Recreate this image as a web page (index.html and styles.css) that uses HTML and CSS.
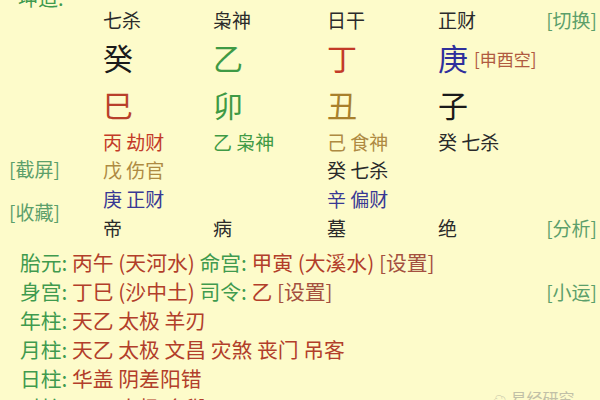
FILE: index.html
```html
<!DOCTYPE html>
<html lang="zh">
<head>
<meta charset="utf-8">
<link rel="stylesheet" href="styles.css">
</head>
<body>
<div class="page">
  <div class="topline"><span class="lbl">坤造:</span></div>
  <div class="pillars">
    <div class="c c1 r1 head">七杀</div>
    <div class="c c2 r1 head">枭神</div>
    <div class="c c3 r1 head">日干</div>
    <div class="c c4 r1 head">正财</div>
    <div class="c c5 r1 right"><span class="btn">[切换]</span></div>

    <div class="c c1 r2 big black">癸</div>
    <div class="c c2 r2 big green">乙</div>
    <div class="c c3 r2 big red">丁</div>
    <div class="c c4 r2 big blue">庚</div>
    <div class="c c5 r2"><span class="kong">[申酉空]</span></div>

    <div class="c c1 r3 big red2">巳</div>
    <div class="c c2 r3 big green">卯</div>
    <div class="c c3 r3 big gold">丑</div>
    <div class="c c4 r3 big black">子</div>

    <div class="side"><span class="btn">[截屏]</span><span class="btn">[收藏]</span></div>

    <div class="c c1 r4 red">丙 劫财</div>
    <div class="c c2 r4 green">乙 枭神</div>
    <div class="c c3 r4 gold2">己 食神</div>
    <div class="c c4 r4 dark">癸 七杀</div>

    <div class="c c1 r5 gold2">戊 伤官</div>
    <div class="c c3 r5 dark">癸 七杀</div>

    <div class="c c1 r6 blue2">庚 正财</div>
    <div class="c c3 r6 blue2">辛 偏财</div>

    <div class="c c1 r7 dark">帝</div>
    <div class="c c2 r7 dark">病</div>
    <div class="c c3 r7 dark">墓</div>
    <div class="c c4 r7 dark">绝</div>
    <div class="c c5 r7 right"><span class="btn">[分析]</span></div>
  </div>

  <div class="info">
    <div class="line"><span><span class="lbl">胎元:</span> <span class="val">丙午 (天河水)</span> <span class="lbl">命宫:</span> <span class="val">甲寅 (大溪水)</span> <span class="set">[设置]</span></span></div>
    <div class="line"><span><span class="lbl">身宫:</span> <span class="val">丁巳 (沙中土)</span> <span class="lbl">司令:</span> <span class="val">乙</span> <span class="set">[设置]</span></span><span class="btn">[小运]</span></div>
    <div class="line"><span><span class="lbl">年柱:</span> <span class="val">天乙 太极 羊刃</span></span></div>
    <div class="line"><span><span class="lbl">月柱:</span> <span class="val">天乙 太极 文昌 灾煞 丧门 吊客</span></span></div>
    <div class="line"><span><span class="lbl">日柱:</span> <span class="val">华盖 阴差阳错</span></span></div>
    <div class="line"><span><span class="lbl">时柱:</span> <span class="val">天乙 太极 金舆</span></span></div>
  </div>
</div>
<div class="watermark"><span class="wm-icon">☁</span> 易经研究</div>
</body>
</html>
```
FILE: styles.css
```css
html, body {
  margin: 0;
  padding: 0;
  background: #fdfbca;
  overflow: hidden;
  width: 600px;
  height: 400px;
}
body {
  font-family: "Noto Sans CJK SC", "Noto Sans", sans-serif;
  font-size: 19px;
  color: #222;
  position: relative;
}
.page {
  width: 600px;
}
.topline {
  height: 24px;
  margin-top: -14px;
  padding-left: 18px;
  font-size: 20px;
  line-height: 24px;
}
.pillars {
  display: grid;
  grid-template-columns: 103px 110px 114px 111px 1fr;
  grid-template-rows: 30px 46px 48px 26px 30px 28px 30px;
  margin-top: -6px;
}
.c {
  display: flex;
  align-items: center;
  white-space: nowrap;
  line-height: 1;
}
.c1 { grid-column: 2; }
.c2 { grid-column: 3; }
.c3 { grid-column: 4; }
.c4 { grid-column: 5; }
.c5 { grid-column: 5; }
.r1 { grid-row: 1; }
.r2 { grid-row: 2; }
.r3 { grid-row: 3; }
.r4 { grid-row: 4; }
.r5 { grid-row: 5; }
.r6 { grid-row: 6; }
.r7 { grid-row: 7; }
.right {
  justify-content: flex-end;
  padding-right: 3px;
}
.c5.r2 {
  padding-left: 36px;
  padding-top: 3px;
}
.head { color: #2a2a2a; }
.big { font-size: 30px; }
.black { color: #1a1a1a; }
.dark { color: #2a2a2a; }
.green { color: #3f9a45; }
.red { color: #c33a28; }
.red2 { color: #b8402a; }
.gold { color: #a8802c; }
.gold2 { color: #ae8a42; }
.blue { color: #2f2f9c; }
.blue2 { color: #383894; }
.btn { color: #5c9f6a; }
.kong {
  color: #b05a40;
  font-size: 17px;
}
.side {
  grid-column: 1;
  grid-row: 4 / 8;
  display: flex;
  flex-direction: column;
  padding-top: 19px;
  padding-left: 9px;
  line-height: 43px;
}
.info {
  padding: 6px 3px 0 20px;
  font-size: 20.8px;
  line-height: 29px;
}
.info .btn {
  font-size: 19px;
}
.line {
  display: flex;
  justify-content: space-between;
  align-items: baseline;
  white-space: nowrap;
}
.lbl { color: #3f9a4e; }
.val { color: #b23e2a; }
.set { color: #a45040; }
.watermark {
  position: absolute;
  left: 493px;
  top: 386px;
  font-size: 16px;
  color: #9a9a90;
  opacity: 0.6;
  white-space: nowrap;
}
.wm-icon {
  font-size: 14px;
}
```
